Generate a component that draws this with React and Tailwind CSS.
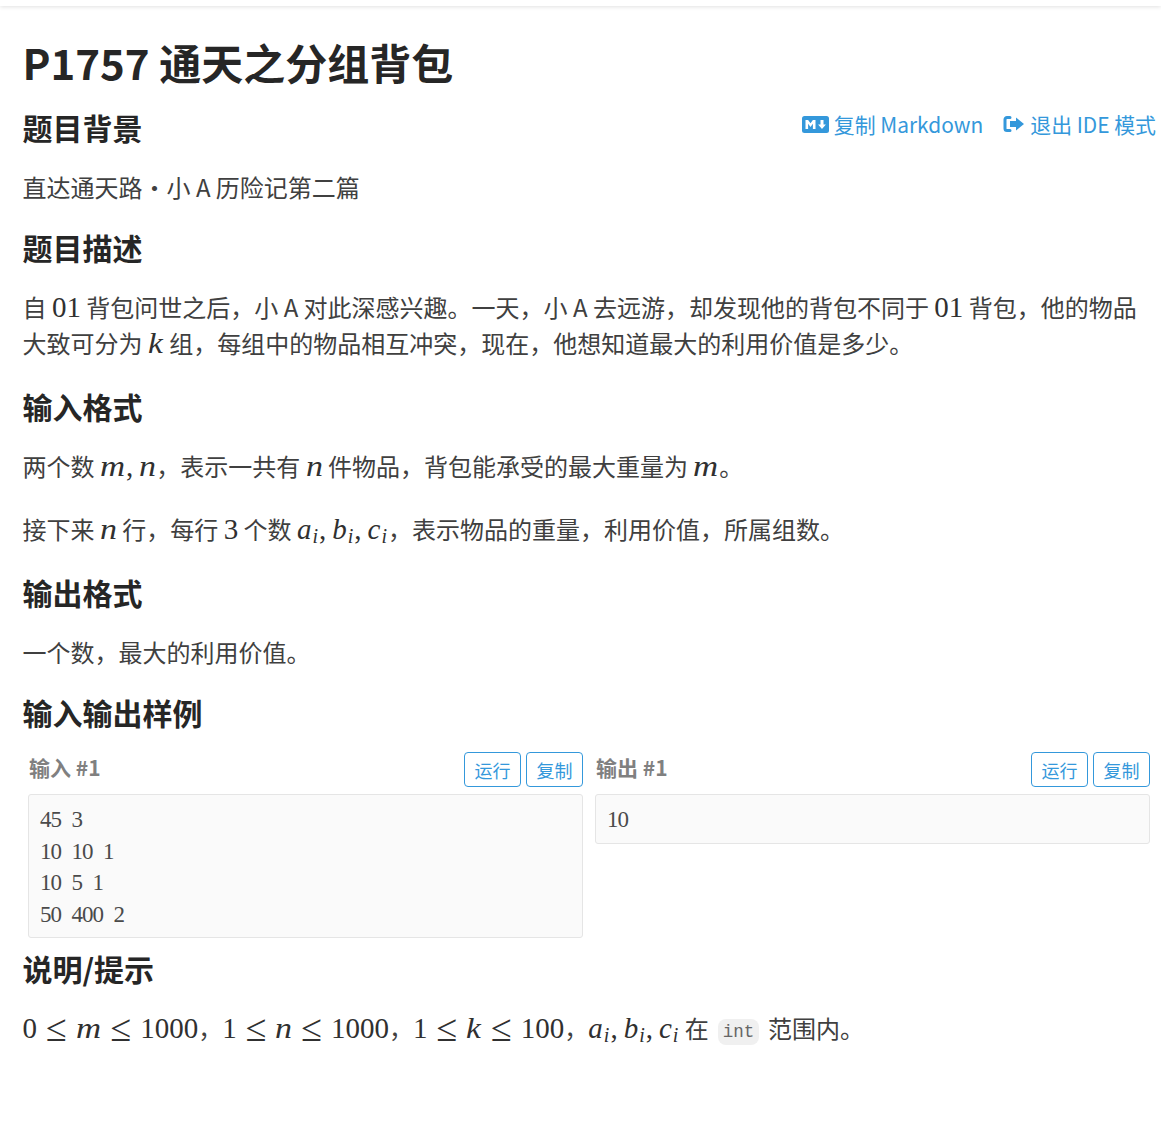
const sans = { fontFamily: '"Noto Sans CJK SC","Noto Sans",sans-serif' };

function M({ c }) {
  if (c === "m") return <span className="inline-block w-[26px] font-['Liberation_Serif'] italic text-[29px] leading-none text-[#303030] origin-left scale-x-[1.2]">m</span>;
  if (c === "n") return <span className="inline-block w-[17px] font-['Liberation_Serif'] italic text-[29px] leading-none text-[#303030] origin-left scale-x-[1.17]">n</span>;
  return <span className="inline-block w-[16px] font-['Liberation_Serif'] italic text-[29px] leading-none text-[#303030] origin-left scale-x-[1.15]">k</span>;
}
function N({ children }) {
  return <span className="font-['Liberation_Serif'] text-[29px] leading-none text-[#303030]">{children}</span>;
}
function Le() {
  return <span className="inline-block mx-[8.9px] font-['Liberation_Serif'] text-[38px] leading-none text-[#303030] align-[-3px]">≤</span>;
}
function Sub({ v, comma }) {
  return (
    <span className="font-['Liberation_Serif'] text-[#303030] text-[29px] leading-none">
      <i>{v}</i>
      <i className="text-[20px] leading-none align-[-4px] ml-[1px] mr-[1px]">i</i>
      {comma && <span className="mr-[6px]">,</span>}
    </span>
  );
}
function H2({ children, className = "" }) {
  return <h2 className={"text-[30px] leading-[40px] font-bold text-[#262626] " + className}>{children}</h2>;
}
function P({ children, className = "" }) {
  return <p className={"text-[24px] leading-[36px] text-[#404040] " + className}>{children}</p>;
}
function Btn({ children }) {
  return <button className="h-[35px] w-[57px] rounded-[4px] border border-[#3498db] text-[#3498db] text-[18px] leading-none">{children}</button>;
}
function Sample({ label, lines }) {
  return (
    <div>
      <div className="flex items-center justify-between h-[41px] mb-[1px]">
        <span className="text-[21px] font-bold text-[#808080] pl-[1px] relative -top-[5px]">{label}</span>
        <div className="flex gap-[5px] self-start"><Btn>运行</Btn><Btn>复制</Btn></div>
      </div>
      <pre className="rounded-[3px] border border-[#e5e5e5] bg-[#fafafa] px-[11px] pt-[9px] pb-[7px] font-['Liberation_Serif'] text-[23px] leading-[31.6px] tracking-[-1px] text-[#4a4a4a] [word-spacing:5.75px]">
        {lines.join("\n")}
      </pre>
    </div>
  );
}
export default function App() {
  return (
    <div style={sans} className="w-[1161px] h-[1137px] bg-white overflow-hidden">
      <div className="h-[6px] bg-white shadow-[0_1px_4px_rgba(0,0,0,0.12)]" />
      <div className="pl-[22.5px] pr-[5px] pt-[28px]">
        <h1 className="text-[42px] leading-[56px] font-bold text-[#262626]">P1757 通天之分组背包</h1>
        <div className="flex justify-between items-start mt-[17px]">
          <H2>题目背景</H2>
          <div className="flex items-center gap-[20px] text-[20.9px] leading-[30px] text-[#3498db] pt-[2px]">
            <span className="flex items-center gap-[5px]">
              <svg width="27" height="17" viewBox="0 0 27 17">
                <rect width="27" height="17" rx="2.5" fill="#3498db" />
                <path d="M3.5 13V4h2.6l2.4 3.2L10.9 4h2.6v9h-2.6V7.8L8.5 11 6.1 7.8V13z M18.5 4h3v4.5h2.4l-3.9 4.6-3.9-4.6h2.4z" fill="#fff" />
              </svg>
              复制 Markdown
            </span>
            <span className="flex items-center gap-[5px]">
              <svg width="22" height="18" viewBox="0 0 22 18">
                <path d="M7 2.5H4A2 2 0 0 0 2 4.5v9a2 2 0 0 0 2 2h3" fill="none" stroke="#3498db" strokeWidth="3" strokeLinecap="round" />
                <path d="M13 2.5 21 9l-8 6.5V12H7V6h6z" fill="#3498db" />
              </svg>
              退出 IDE 模式
            </span>
          </div>
        </div>
        <P className="mt-[22px]">直达通天路・小 A 历险记第二篇</P>
        <H2 className="mt-[22px]">题目描述</H2>
        <P className="mt-[22px]">自 <N>01</N> 背包问世之后，小 A 对此深感兴趣。一天，小 A 去远游，却发现他的背包不同于 <N>01</N> 背包，他的物品大致可分为 <M c="k" /> 组，每组中的物品相互冲突，现在，他想知道最大的利用价值是多少。</P>
        <H2 className="mt-[25px]">输入格式</H2>
        <P className="mt-[22px]">两个数 <M c="m" /><N><span className="mr-[6px]">,</span></N><M c="n" />，表示一共有 <M c="n" /> 件物品，背包能承受的最大重量为 <M c="m" />。</P>
        <P className="mt-[27px]">接下来 <M c="n" /> 行，每行 <N>3</N> 个数 <Sub v="a" comma /><Sub v="b" comma /><Sub v="c" />，表示物品的重量，利用价值，所属组数。</P>
        <H2 className="mt-[25px]">输出格式</H2>
        <P className="mt-[22px]">一个数，最大的利用价值。</P>
        <H2 className="mt-[22px]">输入输出样例</H2>
        <div className="grid grid-cols-2 gap-[12px] ml-[5.5px] mr-[6px] mt-[20px] items-start">
          <Sample label="输入 #1" lines={["45 3", "10 10 1", "10 5 1", "50 400 2"]} />
          <Sample label="输出 #1" lines={["10"]} />
        </div>
        <H2 className="mt-[10px]">说明/提示</H2>
        <P className="mt-[21px]">
          <N>0</N><Le /><M c="m" /><Le /><N>1000</N>，<N>1</N><Le /><M c="n" /><Le /><N>1000</N>，<N>1</N><Le /><M c="k" /><Le /><N>100</N>，<Sub v="a" comma /><Sub v="b" comma /><Sub v="c" /> 在 <code className="relative -top-[1px] font-['Liberation_Mono'] text-[17.5px] bg-[#f0f0f0] rounded-[8px] px-[4.5px] py-[3px] mx-[4px] text-[#666]">int</code> 范围内。
        </P>
      </div>
    </div>
  );
}
